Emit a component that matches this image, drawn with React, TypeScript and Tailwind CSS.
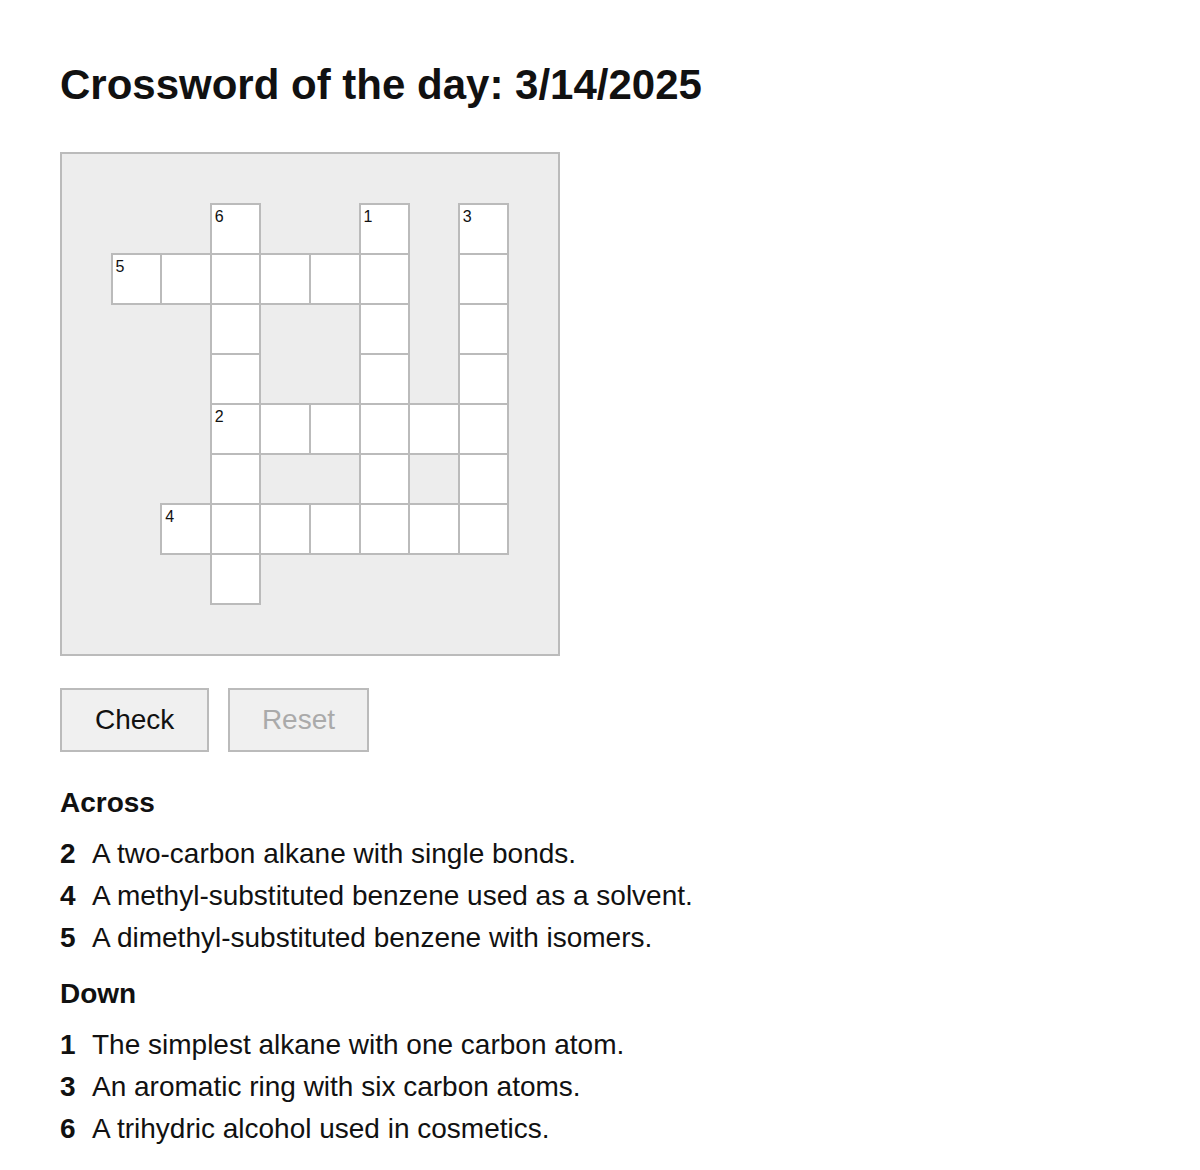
import React from "react";

const ROWS = 10;
const COLS = 10;

type Cell = { num?: number };

const white: Record<string, Cell> = {};
function add(r: number, c: number, num?: number) {
  const k = `${r}-${c}`;
  if (!white[k]) white[k] = {};
  if (num !== undefined) white[k].num = num;
}
// 6 down: col3 rows1-8
for (let r = 1; r <= 8; r++) add(r, 3);
// 1 down: col6 rows 1-7
for (let r = 1; r <= 7; r++) add(r, 6);
// 3 down: col8 rows 1-7
for (let r = 1; r <= 7; r++) add(r, 8);
// 5 across: row2 cols1-6
for (let c = 1; c <= 6; c++) add(2, c);
// 2 across: row5 cols3-8
for (let c = 3; c <= 8; c++) add(5, c);
// 4 across: row7 cols2-8
for (let c = 2; c <= 8; c++) add(7, c);
add(1, 3, 6);
add(1, 6, 1);
add(1, 8, 3);
add(2, 1, 5);
add(5, 3, 2);
add(7, 2, 4);

const across = [
  { n: 2, t: "A two-carbon alkane with single bonds." },
  { n: 4, t: "A methyl-substituted benzene used as a solvent." },
  { n: 5, t: "A dimethyl-substituted benzene with isomers." },
];
const down = [
  { n: 1, t: "The simplest alkane with one carbon atom." },
  { n: 3, t: "An aromatic ring with six carbon atoms." },
  { n: 6, t: "A trihydric alcohol used in cosmetics." },
];

function ClueList({ items }: { items: { n: number; t: string }[] }) {
  return (
    <ul className="mt-[15px]">
      {items.map((c) => (
        <li key={c.n} className="flex text-[28px] leading-[42px]">
          <span className="w-[16px] font-bold">{c.n}</span>
          <span className="ml-[16px]">{c.t}</span>
        </li>
      ))}
    </ul>
  );
}

export default function App() {
  const cells: React.ReactNode[] = [];
  for (let r = 0; r < ROWS; r++) {
    for (let c = 0; c < COLS; c++) {
      const w = white[`${r}-${c}`];
      if (w) {
        cells.push(
          <div
            key={`${r}-${c}`}
            className="relative -m-px border-2 border-[#bbbbbb] bg-white"
          >
            {w.num !== undefined && (
              <span className="absolute left-[3px] top-[4px] text-[16px] leading-[16px]">
                {w.num}
              </span>
            )}
          </div>
        );
      } else {
        cells.push(<div key={`${r}-${c}`} />);
      }
    }
  }

  return (
    <div className="min-h-[1170px] bg-white px-[60px] pt-[61px] pb-[20px] font-['Liberation_Sans',Arial,sans-serif] text-[#111]">
      <h1 className="text-[42px] font-bold leading-[48px]">
        Crossword of the day: 3/14/2025
      </h1>
      <div className="mt-[43px] grid h-[504px] w-[500px] grid-cols-10 grid-rows-10 border-2 border-[#bbbbbb] bg-[#ededed]">
        {cells}
      </div>
      <div className="mt-[32px] flex gap-[19px]">
        <button className="flex h-[64px] items-center border-2 border-[#bbbbbb] bg-[#f0f0f0] px-[33px] text-[28px] text-[#111]">
          Check
        </button>
        <button
          disabled
          className="flex h-[64px] items-center border-2 border-[#bbbbbb] bg-[#f0f0f0] px-[31.5px] text-[28px] text-[#aaaaaa]"
        >
          Reset
        </button>
      </div>
      <h2 className="mt-[35px] text-[28px] font-bold leading-[31px]">Across</h2>
      <ClueList items={across} />
      <h2 className="mt-[19px] text-[28px] font-bold leading-[31px]">Down</h2>
      <ClueList items={down} />
    </div>
  );
}
